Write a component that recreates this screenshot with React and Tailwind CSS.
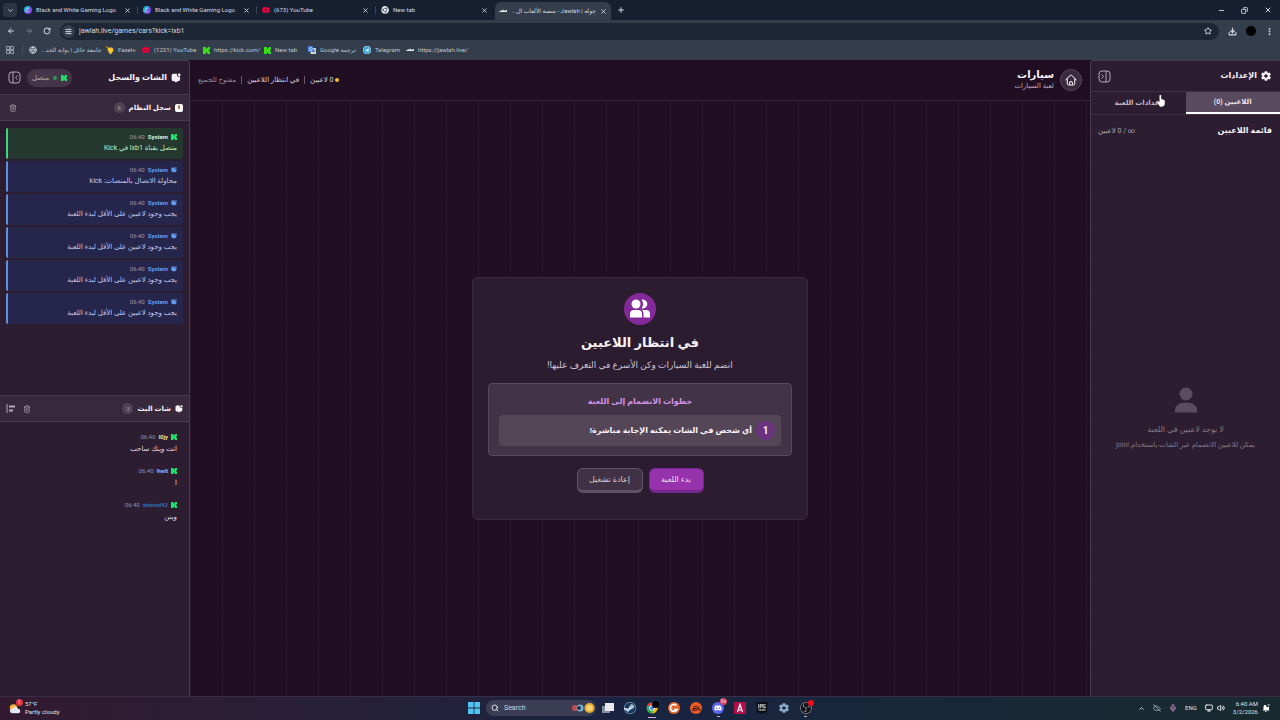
import {
  ArrowLeft, ArrowRight, ChevronDown, ChevronUp, CloudOff, Copy, Download, EllipsisVertical, Globe,
  Mic, Minus, Monitor, Plus, RotateCw, Search, SlidersHorizontal, Star, Trash2, Volume2, X,
} from 'lucide-react';
import { FaSteam, FaDiscord, FaTelegram, FaYoutube } from 'react-icons/fa';
import { IoMdSettings } from 'react-icons/io';
import { SiEpicgames, SiEa, SiObsstudio } from 'react-icons/si';

const tabs = [
  { title: 'Black and White Gaming Logo', icon: 'canva' },
  { title: 'Black and White Gaming Logo', icon: 'canva' },
  { title: '(673) YouTube', icon: 'youtube' },
  { title: 'New tab', icon: 'chrome' },
];

const bookmarks = [
  { title: 'جامعة حائل | بوابة الخد...', icon: 'globe', width: 'w-[69px]', rtl: true },
  { title: 'Fasel+', icon: 'fasel', width: 'w-7' },
  { title: '(1251) YouTube', icon: 'youtube', width: 'w-[53px]' },
  { title: 'https://kick.com/', icon: 'kick', width: 'w-[53px]' },
  { title: 'New tab', icon: 'kick', width: 'w-9' },
  { title: 'ترجمة Google', icon: 'translate', width: 'w-[47px]', rtl: true },
  { title: 'Telegram', icon: 'telegram', width: 'w-[35px]' },
  { title: 'https://jawlah.live/', icon: 'jawlah', width: 'w-[60px]' },
];

const systemLog = [
  { kind: 'kick', text: 'متصل بقناة lxb1 في Kick' },
  { kind: 'info', text: 'محاولة الاتصال بالمنصات: kick' },
  { kind: 'info', text: 'يجب وجود لاعبين على الأقل لبدء اللعبة' },
  { kind: 'info', text: 'يجب وجود لاعبين على الأقل لبدء اللعبة' },
  { kind: 'info', text: 'يجب وجود لاعبين على الأقل لبدء اللعبة' },
  { kind: 'info', text: 'يجب وجود لاعبين على الأقل لبدء اللعبة' },
];

const chat = [
  { user: 'l0jy', color: 'text-[#f3dc9a]', text: 'انت وينك ساحب' },
  { user: '9wlt', color: 'text-[#8fb8f5]', text: 'ا' },
  { user: 'ahmad42', color: 'text-[#2f6fb5]', text: 'وينن' },
];

function KickIcon({ className }) {
  return (
    <svg viewBox="0 0 12 12" className={className} fill="currentColor">
      <path d="M0 0h5v3h1.500V1.500H8V0h4v4.500h-1.500V6H9.500h1v1.500H12V12H8v-1.500H6.500V9H5v3H0z" />
    </svg>
  );
}

function ChatIcon({ className }) {
  return (
    <svg viewBox="0 0 16 16" className={className} fill="currentColor">
      <path d="M3.500 1h6.200a3.300 3.300 0 0 0 4.800 4.300V10a3 3 0 0 1-3 3H10l-2 2.500L6 13H4a3 3 0 0 1-3-3V3.500A2.500 2.500 0 0 1 3.500 1z" />
      <circle cx="13" cy="2.800" r="2.200" />
    </svg>
  );
}

function PanelIcon({ flip }) {
  return (
    <svg viewBox="0 0 26 26" className={`size-[13px] ${flip ? '-scale-x-100' : ''}`} fill="none" stroke="currentColor" strokeWidth="2">
      <rect x="2" y="2" width="22" height="22" rx="6" />
      <path d="M16 2v22M7 9l4 4-4 4" />
    </svg>
  );
}

function ChromeIcon({ className, mono }) {
  return (
    <svg viewBox="0 0 24 24" className={className}>
      <circle cx="12" cy="12" r="11" fill={mono ? '#e5e7eb' : '#34a853'} />
      <path d="M12 12 2.500 6.500A11 11 0 0 1 21.500 6.500z" fill={mono ? '#e5e7eb' : '#ea4335'} />
      <path d="M12 7h9.800A11 11 0 0 1 12 23l4.300-8.500z" fill={mono ? '#e5e7eb' : '#fbbc04'} />
      <circle cx="12" cy="12" r="5.500" fill={mono ? '#1f2937' : '#fff'} />
      <circle cx="12" cy="12" r="4" fill={mono ? '#e5e7eb' : '#4285f4'} />
      {mono && <path d="M12 6.500h9.500M7.200 14.700 2.600 6.800M16.800 14.700 12 23" stroke="#1f2937" strokeWidth="1.800" />}
    </svg>
  );
}

function SiteIcon({ name }) {
  switch (name) {
    case 'canva':
      return (
        <svg viewBox="0 0 16 16" className="size-2 shrink-0">
          <circle cx="8" cy="8" r="8" fill="#7d4be8" />
          <path d="M0 8a8 8 0 0 1 12-7L3 14.200A8 8 0 0 1 0 8z" fill="#16b9cf" />
          <path d="M10.500 5.500C9.800 3.500 5 4.800 5 8.800c0 3.500 4 3.300 5.800.8" fill="none" stroke="#fff" strokeWidth="1.300" />
        </svg>
      );
    case 'youtube':
      return <FaYoutube className="size-2 shrink-0 text-[#e8003c]" />;
    case 'chrome':
      return <ChromeIcon mono className="size-2 shrink-0" />;
    case 'globe':
      return <Globe className="size-2 shrink-0" strokeWidth={3} />;
    case 'fasel':
      return (
        <svg viewBox="0 0 16 16" className="size-2 shrink-0">
          <path d="M4 3h8l3 3-1 5-3 3v2H7v-2l-3-4-1-4z" fill="#f7c433" />
          <circle cx="1.500" cy="2" r="1.500" fill="#f7c433" />
        </svg>
      );
    case 'kick':
      return <KickIcon className="size-[7px] shrink-0 text-[#38e010]" />;
    case 'translate':
      return (
        <svg viewBox="0 0 16 16" className="size-2 shrink-0">
          <rect x="5" y="4" width="11" height="12" rx="1" fill="#d8dce4" />
          <path d="M0 1a1 1 0 0 1 1-1h8l4 12H1a1 1 0 0 1-1-1z" fill="#4a7fe8" />
          <path d="M8.500 5.200A3 3 0 1 0 8.600 7H6" fill="none" stroke="#fff" strokeWidth="1.200" />
          <path d="M10 8h5M12.500 7v1c0 2-1 4-2.500 5M11 9c.5 2 2 3 3.500 4" fill="none" stroke="#667" />
        </svg>
      );
    case 'telegram':
      return <FaTelegram className="size-2 shrink-0 rounded-full bg-white text-[#2ba4df]" />;
    default:
      return (
        <svg viewBox="0 0 16 16" className="size-2 shrink-0" fill="none" stroke="#f3f4f6" strokeWidth="2">
          <path d="M1 9h3.500V6.500M4.500 9H8a1.500 1.500 0 1 0-1.500-1.500M8 9h4V6.500M12 9h3V6" />
        </svg>
      );
  }
}

function BrowserChrome() {
  return (
    <header className="font-[Roboto,'DejaVu_Sans',sans-serif] text-[6px] leading-[10px] text-[#d5dae2]">
      <div className="flex h-5 items-center bg-[#172030]">
        <button aria-label="Search tabs" className="ml-[3px] flex size-[14px] items-center justify-center rounded bg-[#2c3544]">
          <ChevronDown className="size-[7px]" strokeWidth={3} />
        </button>
        <div className="ml-[2px] flex flex-1 items-center">
          {tabs.map((tab, i) => (
            <div key={i} className={`flex h-2 w-[119px] items-center gap-1 border-r pr-[6px] pl-[5px] ${i < 3 ? 'border-[#3d4656]' : 'border-transparent'}`}>
              <SiteIcon name={tab.icon} />
              <span className="whitespace-nowrap">{tab.title}</span>
              <button aria-label="Close tab" className="ml-auto">
                <X className="size-[7px]" strokeWidth={3} />
              </button>
            </div>
          ))}
          <div className="mt-[2px] flex h-[18px] w-[116px] items-center gap-1 rounded-t-md bg-[#333d4b] pr-1 pl-1">
            <SiteIcon name="jawlah" />
            <span dir="rtl" className="flex-1 whitespace-nowrap">جولة | Jawlah - منصة الألعاب ال...</span>
            <button aria-label="Close tab">
              <X className="size-[7px]" strokeWidth={3} />
            </button>
          </div>
          <button aria-label="New tab" className="ml-[6px]">
            <Plus className="size-2" strokeWidth={3} />
          </button>
        </div>
        <div className="flex items-center gap-4 pr-2">
          <button aria-label="Minimize"><Minus className="size-[7px]" strokeWidth={3} /></button>
          <button aria-label="Restore"><Copy className="size-[7px] -scale-x-100" strokeWidth={3} /></button>
          <button aria-label="Close"><X className="size-2" strokeWidth={3} /></button>
        </div>
      </div>

      <div className="flex h-[22px] items-center bg-[#333d4b]">
        <div className="flex w-[60px] items-center gap-[10px] pl-[7px]">
          <button aria-label="Back"><ArrowLeft className="size-2" strokeWidth={3} /></button>
          <button aria-label="Forward" className="text-[#727b88]"><ArrowRight className="size-2" strokeWidth={3} /></button>
          <button aria-label="Reload"><RotateCw className="size-2" strokeWidth={3} /></button>
        </div>
        <div className="flex h-[17px] flex-1 items-center rounded-full bg-[#1d2634] pr-[7px] pl-[2px]">
          <span className="flex size-[13px] items-center justify-center rounded-full bg-[#333d4b]">
            <SlidersHorizontal className="size-[7px]" strokeWidth={3} />
          </span>
          <input
            type="text"
            aria-label="Address"
            defaultValue="jawlah.live/games/cars?kick=lxb1"
            className="ml-1 flex-1 bg-transparent text-[7px] leading-3 outline-none"
          />
          <button aria-label="Bookmark this page"><Star className="size-2" strokeWidth={3} /></button>
        </div>
        <div className="flex items-center gap-[9px] pr-[6px] pl-[9px]">
          <button aria-label="Downloads"><Download className="size-[9px]" strokeWidth={3} /></button>
          <button aria-label="Profile" className="size-[10px] rounded-full bg-black" />
          <button aria-label="Menu"><EllipsisVertical className="size-[9px]" strokeWidth={3} /></button>
        </div>
      </div>

      <nav className="flex h-[18px] items-center bg-[#333d4b] pb-[2px] pl-[6px] text-[#bfc5cf]">
        <svg viewBox="0 0 8 8" className="size-2" fill="none" stroke="#99a1ad">
          <path d="M.5.5h3v3h-3zM4.500.5h3v3h-3zM.5 4.500h3v3h-3zM4.500 4.500h3v3h-3z" />
        </svg>
        <span className="ml-2 h-2 w-px bg-[#4a5363]" />
        <div className="flex items-center gap-2 pl-[6px]">
          {bookmarks.map((b, i) => (
            <a key={i} href="#" className={`flex items-center gap-1 ${b.width}`}>
              <SiteIcon name={b.icon} />
              <span dir={b.rtl ? 'rtl' : 'ltr'} className="whitespace-nowrap">{b.title}</span>
            </a>
          ))}
        </div>
      </nav>
    </header>
  );
}

function SettingsPanel() {
  return (
    <aside className="flex w-[190px] shrink-0 flex-col rounded-tl border-t border-l border-[#4a3a4d] bg-[#2d1d30]">
      <div className="flex h-[30px] items-center justify-between pr-2 pl-[7px]">
        <h2 className="flex items-center gap-[3px] text-[8px] font-bold">
          <IoMdSettings className="size-3" />
          الإعدادات
        </h2>
        <button aria-label="إخفاء الإعدادات" className="text-[#b3a9b5]">
          <PanelIcon />
        </button>
      </div>

      <div role="tablist" className="grid h-6 grid-cols-2 border-t border-b border-[#403044] text-[7px] font-bold">
        <button role="tab" aria-selected="true" className="border-b-2 border-white bg-[#5a4a5e] text-[#e9e3ea]">اللاعبين (0)</button>
        <button role="tab" aria-selected="false" className="relative text-[#c3bac5]">
          إعدادات اللعبة
          <svg viewBox="0 0 16 24" className="absolute top-[3px] right-[21px] h-3 w-2" fill="#fff">
            <path d="M5 1.500a1.700 1.700 0 0 1 3.400 0V8l5 1.500a3 3 0 0 1 2.200 3V17c0 3-2 6-5 6H8c-2 0-3-1-4-2.500L.5 14c-.7-1.500 1-2.500 2-1.500L5 15z" />
          </svg>
        </button>
      </div>

      <div className="flex items-center justify-between pt-2 pr-2 pl-[7px]">
        <h3 className="text-[8px] leading-4 font-bold">قائمة اللاعبين</h3>
        <span className="text-[7px] text-[#b3a9b5]">∞ / 0 لاعبين</span>
      </div>

      <div className="flex flex-1 flex-col items-center justify-center pt-[2px] text-[#85798a]">
        <svg viewBox="0 0 22 26" className="h-[26px] w-[22px]" fill="#5b4c60">
          <circle cx="11" cy="7" r="6.500" />
          <path d="M0 25.500v-2C0 19 4 15.500 11 15.500s11 3.500 11 8v2z" />
        </svg>
        <p className="mt-2 text-[8px] leading-[18px]">لا يوجد لاعبين في اللعبة</p>
        <p className="text-[7px] leading-3">يمكن للاعبين الانضمام عبر الشات باستخدام !join</p>
      </div>
    </aside>
  );
}

function WaitingCard() {
  return (
    <section className="flex w-[336px] flex-col items-center rounded-md border border-[#3a2a3d] bg-[#2c1c2f] px-[15px] pt-[15px] pb-[26px]">
      <span className="flex size-8 items-center justify-center rounded-full bg-[#83299a]">
        <svg viewBox="0 0 20 20" className="size-5" fill="#fff">
          <circle cx="6" cy="5" r="4.500" />
          <path d="M11.500.7a4.500 4.500 0 1 1 0 8.600 6.500 6.500 0 0 0 0-8.600z" />
          <path d="M0 18.500V15a4 4 0 0 1 4-4h4a4 4 0 0 1 4 4v3.500z" />
          <path d="M13.500 18.500V15c0-1.600-.6-3-1.500-4h4a4 4 0 0 1 4 4v3.500z" />
        </svg>
      </span>
      <h2 className="mt-2 text-[13px] leading-5 font-bold">في انتظار اللاعبين</h2>
      <p className="mt-1 text-[9px] leading-4 text-[#cdc3cf]">انضم للعبة السيارات وكن الأسرع في التعرف عليها!</p>

      <div className="mt-[10px] w-full rounded border border-[#5a4a5d] bg-[#433347] px-[10px] pt-[10px] pb-[9px]">
        <h3 className="text-center text-[8px] leading-4 font-bold text-[#d292e3]">خطوات الانضمام إلى اللعبة</h3>
        <div className="mt-[5px] flex h-[31px] items-center gap-1 rounded bg-[#544657] px-[6px]">
          <span className="flex size-[19px] items-center justify-center rounded-full bg-[#6b3280] text-[10px] font-bold">1</span>
          <span className="text-[8px] font-bold">أي شخص في الشات يمكنه الإجابة مباشرة!</span>
        </div>
      </div>

      <div className="mt-3 flex gap-[6px] text-[8px]">
        <button className="h-[25px] w-[55px] rounded-md border border-b-3 border-[#742790] bg-[#9532ac] text-[#f2dff6]">بدء اللعبة</button>
        <button className="h-[25px] w-[66px] rounded-md border border-b-3 border-[#615265] bg-[#413144] text-[#d5ccd7]">إعادة تشغيل</button>
      </div>
    </section>
  );
}

function GameArea() {
  return (
    <main className="flex min-w-0 flex-1 flex-col bg-[#200f23]">
      <div className="flex h-[41px] items-center justify-between border-b border-[#33213a] px-2">
        <div className="flex items-center gap-[6px]">
          <a href="#" aria-label="الرئيسية" className="flex size-[22px] items-center justify-center rounded-full border border-[#57475b] bg-[#392a3d]">
            <svg viewBox="0 0 24 24" className="size-3" fill="none" stroke="#fff" strokeWidth="2" strokeLinecap="round" strokeLinejoin="round">
              <path d="M1.500 11.500 10.500 3a2.200 2.200 0 0 1 3 0l9 8.500M4.500 10v9a3 3 0 0 0 3 3h9a3 3 0 0 0 3-3v-9" />
              <path d="M9 20v-2a3 3 0 0 1 6 0v2" />
            </svg>
          </a>
          <div>
            <h1 className="text-[10px] leading-3 font-bold">سيارات</h1>
            <p className="text-[7px] leading-[11px] text-[#b9adbc]">لعبة السيارات</p>
          </div>
        </div>
        <div className="flex items-center gap-[5px] text-[7px] text-[#d9d0db]">
          <span className="flex items-center gap-[2px]">
            <span className="size-1 rounded-full bg-[#f2bd2c]" />
            0 لاعبين
          </span>
          <span className="h-2 w-px bg-[#6b5d6f]" />
          <span>في انتظار اللاعبين</span>
          <span className="h-2 w-px bg-[#6b5d6f]" />
          <span className="text-[#94899a]">مفتوح للجميع</span>
        </div>
      </div>
      <div className="flex flex-1 items-center justify-center bg-[linear-gradient(#231227_1px,transparent_1px),linear-gradient(90deg,#28162c_1px,transparent_1px)] bg-size-[32px_32px]">
        <WaitingCard />
      </div>
    </main>
  );
}

function SectionHeader({ icon, title, count, children }) {
  return (
    <div className="flex h-[27px] items-center justify-between border-t border-b border-[#4a3a4d] bg-[#38283c] px-[6px]">
      <div className="flex items-center gap-1">
        {icon}
        <h3 className="text-[7px] font-bold">{title}</h3>
        <span className="flex size-[11px] items-center justify-center rounded-full bg-[#514255] text-[6px] text-[#a99dac]">{count}</span>
      </div>
      <div className="flex items-center gap-2 text-[#b3a9b5]">{children}</div>
    </div>
  );
}

function ChatPanel() {
  return (
    <aside className="flex w-[190px] shrink-0 flex-col rounded-tr border-t border-r border-[#4a3a4d] bg-[#2d1d30]">
      <div className="flex h-[33px] items-center justify-between px-2">
        <h2 className="flex items-center gap-1 text-[8px] font-bold">
          <ChatIcon className="size-[10px]" />
          الشات والسجل
        </h2>
        <div className="flex items-center gap-[6px]">
          <span className="flex h-[18px] items-center gap-1 rounded-full bg-[#453549] px-[5px] text-[7px] text-[#b3a9b5]">
            <KickIcon className="size-[6px] text-[#1fe36a]" />
            <span className="size-1 rounded-full bg-[#2a9a5c]" />
            متصل
          </span>
          <button aria-label="إخفاء الشات" className="text-[#b3a9b5]">
            <PanelIcon flip />
          </button>
        </div>
      </div>

      <section className="flex flex-1 flex-col">
        <SectionHeader
          icon={<span className="flex size-2 items-center justify-center rounded-xs bg-white text-[7px] leading-none font-bold text-[#38283c]">i</span>}
          title="سجل النظام"
          count={6}
        >
          <button aria-label="مسح السجل" className="ml-[3px]"><Trash2 className="size-2" strokeWidth={2} /></button>
        </SectionHeader>
        <ul className="flex flex-col gap-[2px] px-[6px] py-[7px]">
          {systemLog.map((m, i) => (
            <li
              key={i}
              className={`rounded-xs border-l-2 px-[6px] pt-[3px] pb-1 ${
                m.kind === 'kick' ? 'border-[#37d97a] bg-[#25382f]' : 'border-[#5f8fdd] bg-[#26264d]'
              }`}
            >
              <div className="flex items-center gap-[3px] text-[6px] leading-[11px]">
                {m.kind === 'kick' ? <KickIcon className="size-[6px] text-[#1fe36a]" /> : <ChatIcon className="size-[6px] text-[#5f9ff0]" />}
                <b className={m.kind === 'kick' ? 'text-[#d4f5e0]' : 'text-[#5f9ff0]'}>System</b>
                <time className="text-[#9c95ad]">06:40</time>
              </div>
              <p className={`text-[7px] leading-[13px] ${m.kind === 'kick' ? 'text-[#b9f3c9]' : 'text-[#c0c9ee]'}`}>{m.text}</p>
            </li>
          ))}
        </ul>
      </section>

      <section className="flex flex-1 flex-col">
        <SectionHeader icon={<ChatIcon className="size-2" />} title="شات البث" count={3}>
          <button aria-label="مسح الشات"><Trash2 className="size-2" strokeWidth={2} /></button>
          <button aria-label="محاذاة">
            <svg viewBox="0 0 9 9" className="size-[9px]" fill="none" stroke="currentColor">
              <path d="M1 0v9" />
              <path d="M3 2.500h6M3 6.500h4" strokeWidth="2" />
            </svg>
          </button>
        </SectionHeader>
        <ul className="flex flex-col gap-[10px] px-3 py-[9px]">
          {chat.map((m) => (
            <li key={m.user}>
              <div className="flex items-center gap-[3px] text-[6px] leading-3">
                <KickIcon className="size-[6px] text-[#1fe36a]" />
                <b className={m.color}>{m.user}</b>
                <time className="text-[#9c91a0]">06:40</time>
              </div>
              <p className="text-[7px] leading-3 text-[#e3dbe5]">{m.text}</p>
            </li>
          ))}
        </ul>
      </section>
    </aside>
  );
}

function Taskbar() {
  return (
    <footer className="grid h-6 grid-cols-[1fr_auto_1fr] items-center border-t border-[#3a2c44] bg-linear-to-r from-[#321a30] via-[#192441] to-[#182a2f] pb-px font-[Roboto,sans-serif] text-[6px] leading-2 text-[#dfe3ea]">
      <div className="flex items-center gap-1 pl-[9px]">
        <span className="relative">
          <svg viewBox="0 0 16 16" className="size-3">
            <circle cx="6" cy="8" r="5" fill="#f4b53a" />
            <path d="M4 15a3 3 0 0 1 .5-6 4 4 0 0 1 7.500 0 3 3 0 0 1 0 6z" fill="#dfe7f2" />
          </svg>
          <span className="absolute -top-[3px] -right-[2px] flex size-[7px] items-center justify-center rounded-full bg-[#e0323c] text-[5px] leading-none">1</span>
        </span>
        <div>
          <p>57°F</p>
          <p>Partly cloudy</p>
        </div>
      </div>

      <div className="flex items-center gap-[10px]">
        <button aria-label="Start">
          <svg viewBox="0 0 12 12" className="size-3" fill="#52c4f2">
            <path d="M0 0h5.600v5.600H0zM6.400 0H12v5.600H6.400zM0 6.400h5.600V12H0zM6.400 6.400H12V12H6.400z" />
          </svg>
        </button>
        <label className="-ml-1 flex h-4 w-[110px] items-center gap-[5px] rounded-full bg-[#3b3d55] pr-px pl-[5px]">
          <Search className="size-2" strokeWidth={3} />
          <input type="text" aria-label="Search" placeholder="Search" className="w-12 flex-1 bg-transparent text-[7px] outline-none placeholder:text-[#d3d5df]" />
          <svg viewBox="0 0 24 12" className="h-3 w-6">
            <circle cx="4" cy="6" r="3" fill="#c64b52" />
            <circle cx="9" cy="6" r="3.500" fill="#6eb6d6" />
            <circle cx="8" cy="6" r="2" fill="#25324a" />
            <circle cx="18.500" cy="6" r="5" fill="#e7ad31" />
            <circle cx="18.500" cy="6" r="3" fill="#f8d375" />
          </svg>
        </label>
        <button aria-label="Task view" className="-ml-1">
          <svg viewBox="0 0 12 12" className="size-3">
            <path d="M0 4h8v7H0z" fill="#878d98" />
            <path d="M3 1h9v8H3z" fill="#e8eaee" />
          </svg>
        </button>
        <button aria-label="Steam"><FaSteam className="size-3 rounded-full bg-[#e5eef8] text-[#123a63]" /></button>
        <button aria-label="Chrome" className="relative">
          <ChromeIcon className="size-3" />
          <span className="absolute -top-px -right-px size-[7px] rounded-full bg-black" />
          <span className="absolute -bottom-1 left-[2px] h-px w-2 bg-[#d8a8dc]" />
        </button>
        <button aria-label="Player">
          <svg viewBox="0 0 12 12" className="size-3">
            <circle cx="6" cy="6" r="6" fill="#e9672b" />
            <path d="M8.500 3.500a3.500 3.500 0 1 0 .5 4H6" fill="none" stroke="#fff" strokeWidth="1.600" />
          </svg>
        </button>
        <button aria-label="EA" className="flex size-3 items-center justify-center rounded-full bg-[#ec5a24] text-[#3a130c]"><SiEa className="size-[9px]" /></button>
        <button aria-label="Discord" className="relative flex size-3 items-center justify-center rounded-full bg-[#5865f2]">
          <FaDiscord className="size-2 text-white" />
          <span className="absolute -top-1 -right-[3px] flex size-[7px] items-center justify-center rounded-full bg-[#e0425a] text-[5px] leading-none">9+</span>
          <span className="absolute -bottom-[3px] h-px w-[3px] bg-[#b4b8c4]" />
        </button>
        <button aria-label="Launcher">
          <svg viewBox="0 0 12 12" className="size-3">
            <rect width="12" height="12" rx="1" fill="#b0114a" />
            <path d="M3.500 10 6 2.500 8.500 10M6 7v2" fill="none" stroke="#fff" strokeWidth="1.200" />
          </svg>
        </button>
        <button aria-label="Epic Games" className="relative">
          <span className="absolute inset-[2px] bg-[#e8e8e8]" />
          <SiEpicgames className="relative size-3 text-[#08090c]" />
        </button>
        <button aria-label="Settings"><IoMdSettings className="size-3 text-[#8eb0ca]" /></button>
        <button aria-label="OBS" className="relative">
          <SiObsstudio className="size-3 rounded-full bg-[#15161a] text-[#c9ccd2]" />
          <span className="absolute -top-[2px] -right-[2px] size-[6px] rounded-full bg-[#f0101c]" />
          <span className="absolute -bottom-[3px] left-1 h-px w-[3px] bg-[#b4b8c4]" />
        </button>
      </div>

      <div className="flex items-center justify-end gap-2 pr-[10px]">
        <ChevronUp className="size-[7px]" strokeWidth={3} />
        <CloudOff className="size-2 text-[#8a95a0]" strokeWidth={3} />
        <Mic className="size-2 text-[#b77fae]" strokeWidth={3} />
        <span>ENG</span>
        <span className="flex items-center gap-1">
          <Monitor className="size-2" strokeWidth={3} />
          <Volume2 className="size-2" strokeWidth={3} />
        </span>
        <div className="flex items-center gap-1 text-right">
          <div>
            <p>6:40 AM</p>
            <p>3/2/2026</p>
          </div>
          <svg viewBox="0 0 16 16" className="size-2" fill="#fff">
            <path d="M3 11V6a4 4 0 0 1 5-4l1 4h5v5l1 2H1zM5 14h5l-2 2z" />
            <path d="M10 0h5l-3 4h3" fill="none" stroke="#fff" />
          </svg>
        </div>
      </div>
    </footer>
  );
}

export default function App() {
  return (
    <div className="flex min-h-screen flex-col bg-[#200f23]">
      <BrowserChrome />
      <div dir="rtl" className="flex flex-1 font-[Roboto,'DejaVu_Sans',sans-serif] leading-3 text-[#f7f2f8]">
        <SettingsPanel />
        <GameArea />
        <ChatPanel />
      </div>
      <Taskbar />
    </div>
  );
}
